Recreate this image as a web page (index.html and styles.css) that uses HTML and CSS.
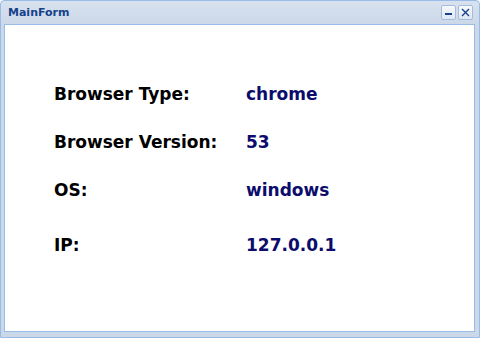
FILE: index.html
```html
<!DOCTYPE html>
<html>
<head>
<meta charset="utf-8">
<link rel="stylesheet" href="styles.css">
</head>
<body>
<div class="window">
  <div class="header">
    <span class="title">MainForm</span>
    <div class="tools">
      <span class="tool"><svg width="13" height="13" viewBox="0 0 13 13"><rect x="3" y="7" width="7" height="2" fill="#15428b"/></svg></span>
      <span class="tool"><svg width="13" height="13" viewBox="0 0 13 13"><path d="M3 3 L10 10 M10 3 L3 10" stroke="#15428b" stroke-width="1.4"/></svg></span>
    </div>
  </div>
  <div class="body">
    <div class="grid">
      <div class="label">Browser Type:</div><div class="value">chrome</div>
      <div class="label">Browser Version:</div><div class="value">53</div>
      <div class="label">OS:</div><div class="value">windows</div>
      <div class="label ip">IP:</div><div class="value ip">127.0.0.1</div>
    </div>
  </div>
</div>
</body>
</html>
```
FILE: styles.css
```css
html, body { margin: 0; padding: 0; background: #fff; }
.window {
  width: 480px; height: 338px; box-sizing: border-box;
  background: linear-gradient(#d8e2ef, #cbd8e8 24px, #cbd8e8);
  border: 1px solid #99bbe8;
  border-radius: 4px 4px 0 0;
  display: flex; flex-direction: column;
  padding: 0 4px 5px 3px;
  font-family: "DejaVu Sans", Verdana, sans-serif;
}
.header {
  height: 23px; display: flex; align-items: center; justify-content: space-between;
  padding: 0 2px 0 4px;
}
.title { font-size: 11px; font-weight: bold; color: #15428b; }
.tools { display: flex; gap: 2px; }
.tool {
  width: 13px; height: 13px; display: block;
  background: linear-gradient(#f6f9fd, #dde7f3);
  border: 1px solid #a5bcd9; border-radius: 2px;
}
.tool svg { display: block; }
.body {
  flex: 1; background: #fff; border: 1px solid #99bbe8;
  padding: 59px 0 0 49px;
}
.grid {
  display: grid; grid-template-columns: 192px auto;
  grid-auto-rows: 48px;
  font-size: 17px; font-weight: bold;
}
.label { color: #000; }
.value { color: #0c0c6c; }
.ip { padding-top: 7px; }
```
